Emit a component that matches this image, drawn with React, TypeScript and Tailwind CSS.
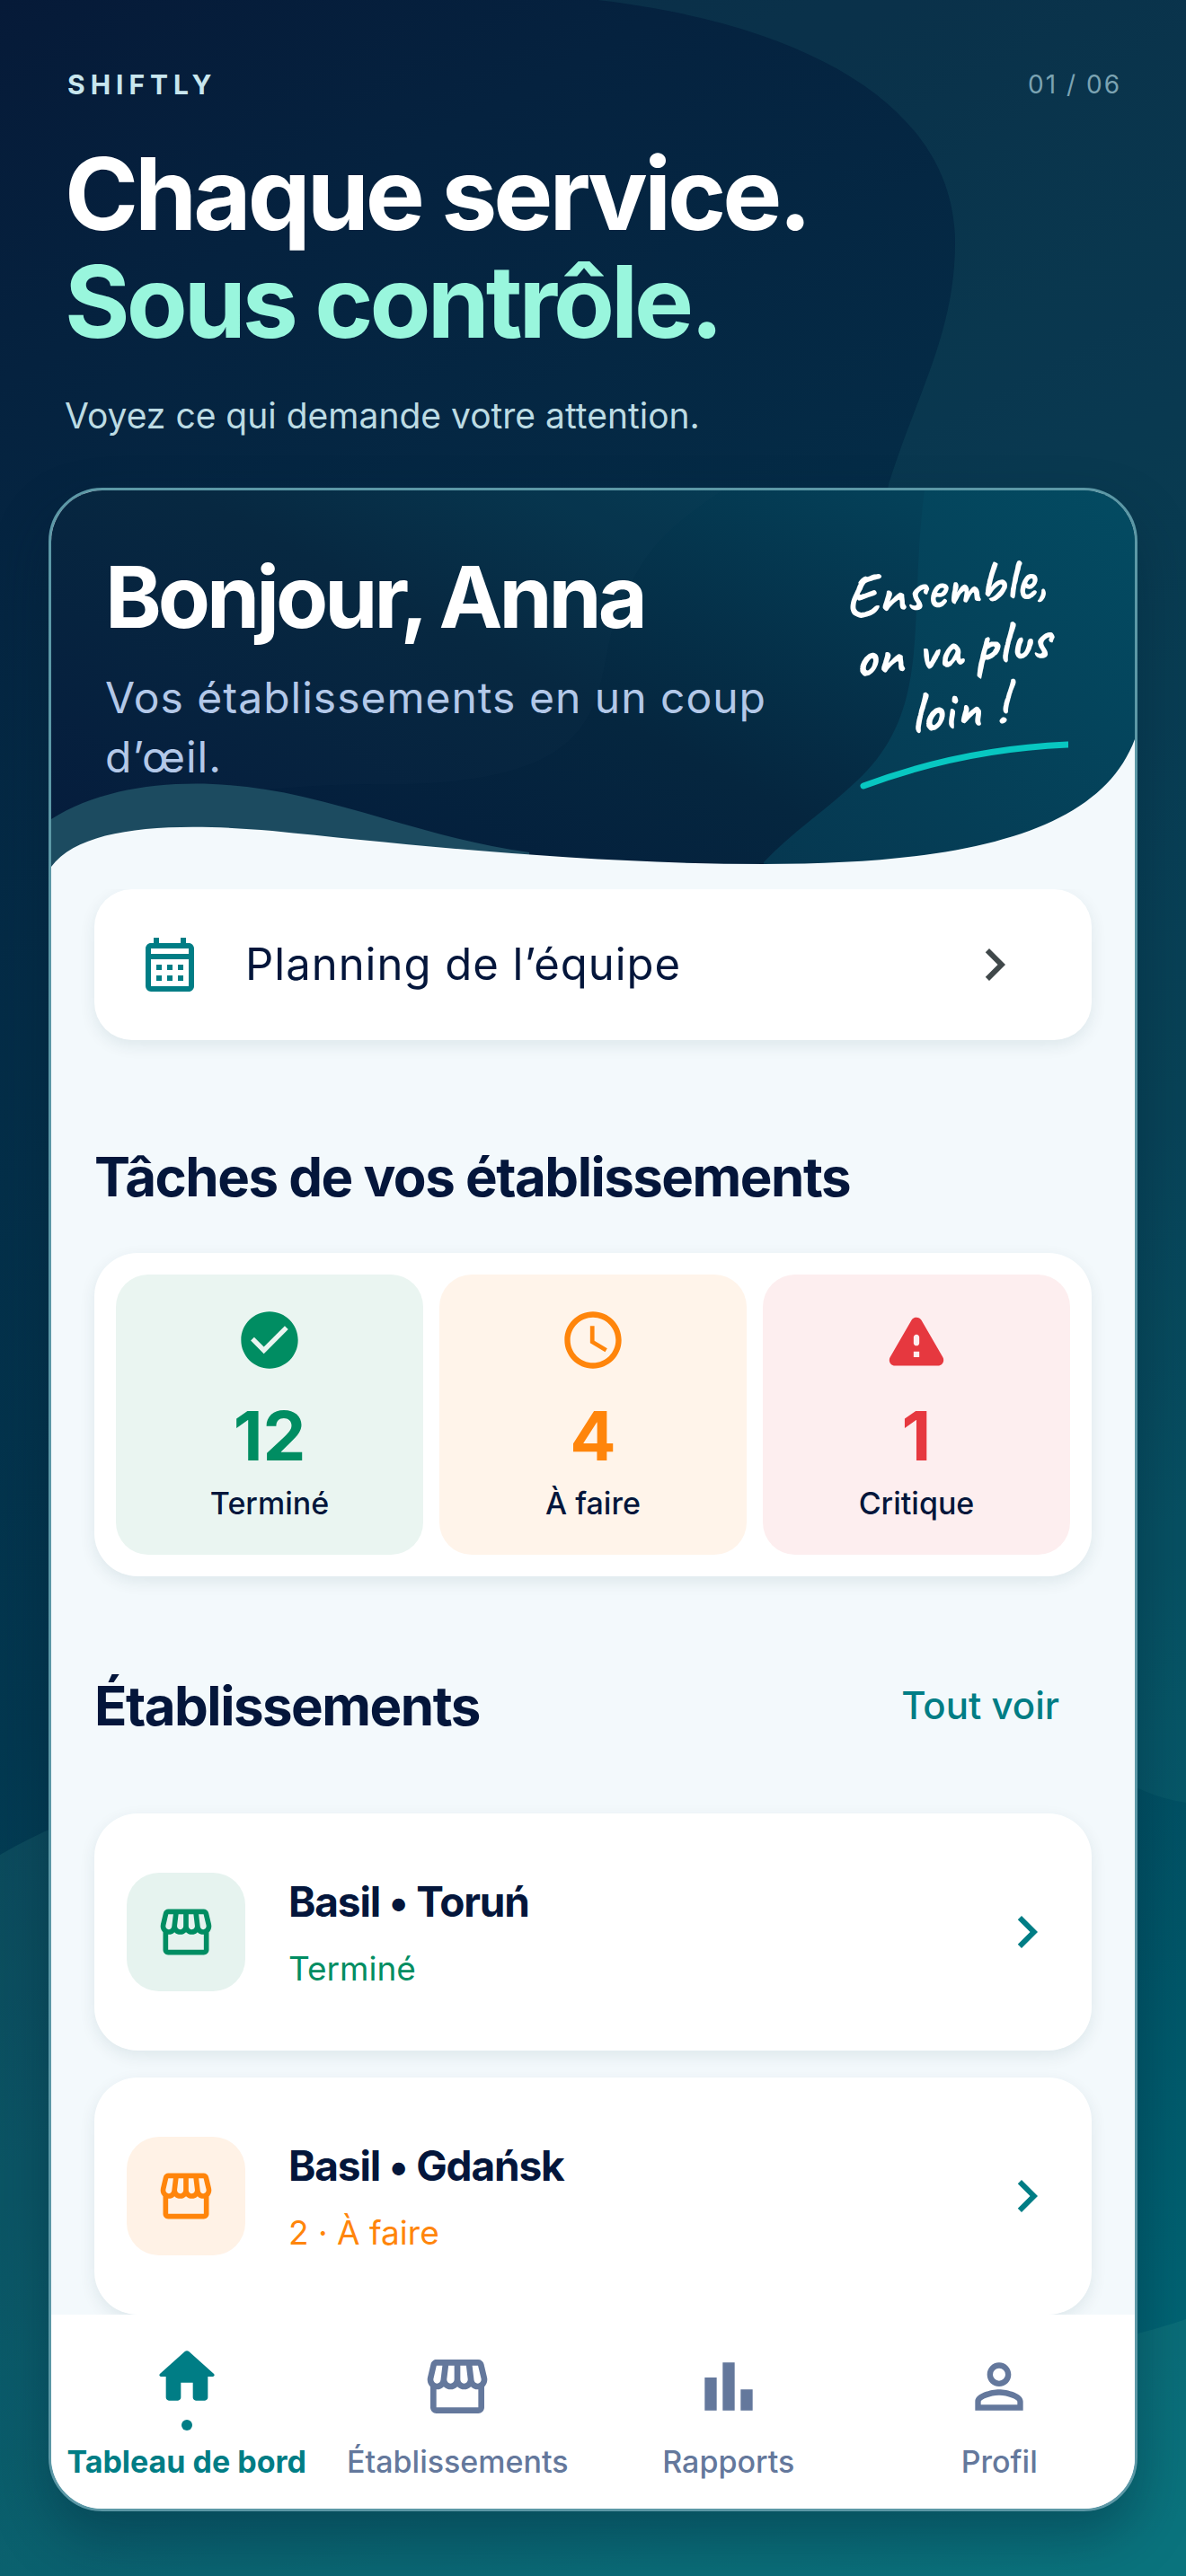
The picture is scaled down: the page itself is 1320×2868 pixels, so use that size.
import type {ComponentType} from 'react'
import {
  MdAccessTime,
  MdBarChart,
  MdChevronRight,
  MdOutlineCalendarMonth,
  MdOutlineStorefront,
  MdPersonOutline,
} from 'react-icons/md'

type IconProps = {className?: string}

function CheckCircleIcon({className}: IconProps) {
  return (
    <svg viewBox="0 0 24 24" fill="currentColor" className={className} aria-hidden="true">
      <path d="M12 2C6.48 2 2 6.48 2 12s4.48 10 10 10 10-4.48 10-10S17.52 2 12 2zm-2 14.8-4.6-4.65 1.2-1.2L10 14.4l7.35-7.4 1.2 1.2z" />
    </svg>
  )
}

function WarningIcon({className}: IconProps) {
  return (
    <svg viewBox="0 0 24 24" fill="currentColor" className={className} aria-hidden="true">
      <path d="M4.47 21h15.06c1.54 0 2.5-1.67 1.73-3L13.73 4.99c-.77-1.33-2.69-1.33-3.46 0L2.74 18c-.77 1.33.19 3 1.73 3zM12 14c-.55 0-1-.45-1-1v-2c0-.55.45-1 1-1s1 .45 1 1v2c0 .55-.45 1-1 1zm1 4h-2v-2h2v2z" />
    </svg>
  )
}

function HomeIcon({className}: IconProps) {
  return (
    <svg viewBox="0 0 24 24" fill="currentColor" className={className} aria-hidden="true">
      <path d="M10 19v-5h4v5c0 .55.45 1 1 1h3c.55 0 1-.45 1-1v-7h1.7c.46 0 .68-.57.33-.87L12.67 3.6c-.38-.34-.96-.34-1.34 0l-8.36 7.53c-.34.3-.13.87.33.87H5v7c0 .55.45 1 1 1h3c.55 0 1-.45 1-1z" />
    </svg>
  )
}

function PageBackground() {
  return (
    <svg
      viewBox="0 0 1320 2868"
      preserveAspectRatio="none"
      className="absolute inset-0 -z-10 h-full w-full"
      aria-hidden="true"
    >
      <defs>
        <linearGradient id="page" gradientUnits="userSpaceOnUse" x1="0" y1="0" x2="1500" y2="2700">
          <stop offset="0" stopColor="#061a38" />
          <stop offset="0.12" stopColor="#05223f" />
          <stop offset="0.55" stopColor="#033850" />
          <stop offset="1" stopColor="#006a78" />
        </linearGradient>
      </defs>
      <rect width="1320" height="2868" fill="url(#page)" />
      <path
        d="M665 0 C920 30 1063 130 1063 270 C1063 370 1020 440 989 539 C900 1100 1000 1960 1320 2007 V0 Z"
        fill="#2a8a85"
        fillOpacity="0.14"
      />
      <path
        d="M0 2065 C250 1920 500 2000 700 2300 C850 2600 1060 2670 1320 2582 V2868 H0 Z"
        fill="#4aa89a"
        fillOpacity="0.14"
      />
    </svg>
  )
}

function HeroBackground() {
  return (
    <svg
      viewBox="0 0 1206 444"
      preserveAspectRatio="none"
      className="absolute inset-0 -z-10 h-full w-full"
      aria-hidden="true"
    >
      <defs>
        <linearGradient id="hero" x1="0" y1="1" x2="1" y2="0.3">
          <stop offset="0" stopColor="#03193a" />
          <stop offset="0.55" stopColor="#05263f" />
          <stop offset="1" stopColor="#044159" />
        </linearGradient>
        <linearGradient id="heroSide" x1="0" y1="1" x2="1" y2="0">
          <stop offset="0" stopColor="#063750" />
          <stop offset="1" stopColor="#034b62" />
        </linearGradient>
      </defs>
      <rect width="1206" height="444" fill="url(#hero)" />
      <path
        d="M747 0 C690 40 660 60 629 141 C600 220 640 330 364 327 C250 327 120 345 0 366 V0 Z"
        fill="#4a6a80"
        fillOpacity="0.04"
      />
      <path d="M972 0 C953 144 983 244 896 324 C860 358 825 380 793 414 V444 H1206 V0 Z" fill="url(#heroSide)" />
      <path d="M0 366 C73 320 183 318 280 341 C373 363 443 391 532 403 V444 H0 Z" fill="#1c4b60" />
      <path
        d="M0 419 C33 374 133 369 246 379 C393 394 593 416 793 416 C1023 416 1168 379 1206 277 V444 H0 Z"
        fill="#f3f9fc"
      />
    </svg>
  )
}

type Stat = {
  value: number
  label: string
  icon: ComponentType<IconProps>
  tile: string
  color: string
}

const stats: Stat[] = [
  {value: 12, label: 'Terminé', icon: CheckCircleIcon, tile: 'bg-[#eaf5f1]', color: 'text-[#008d62]'},
  {value: 4, label: 'À faire', icon: MdAccessTime, tile: 'bg-[#fff4ea]', color: 'text-[#ff850b]'},
  {value: 1, label: 'Critique', icon: WarningIcon, tile: 'bg-[#fdeeef]', color: 'text-[#e6383f]'},
]

const venues = [
  {name: 'Basil • Toruń', status: 'Terminé', tile: 'bg-[#e6f3ef]', color: 'text-[#008d62]'},
  {name: 'Basil • Gdańsk', status: '2 · À faire', tile: 'bg-[#fff2e6]', color: 'text-[#ff850b]'},
]

const tabs: {label: string; icon: ComponentType<IconProps>; active?: boolean}[] = [
  {label: 'Tableau de bord', icon: HomeIcon, active: true},
  {label: 'Établissements', icon: MdOutlineStorefront},
  {label: 'Rapports', icon: MdBarChart},
  {label: 'Profil', icon: MdPersonOutline},
]

export default function App() {
  return (
    <div className="relative isolate flex min-h-screen flex-col overflow-hidden px-[54px] pb-[72px] font-[Inter,sans-serif]">
      <PageBackground />

      <header className="px-[18px] pt-[74px]">
        <div className="flex items-center justify-between pl-[3px] leading-[40px]">
          <span className="text-[30px] font-bold tracking-[6px] text-[#c8e6ee]">SHIFTLY</span>
          <span className="text-[28px] tracking-[2px] text-[#7ba3b2]">01 / 06</span>
        </div>
        <h1 className="mt-[42px] text-[111px] leading-[120px] font-bold tracking-[-4px] text-white">
          Chaque service.
          <br />
          <span className="text-[#99f6dd]">Sous contrôle.</span>
        </h1>
        <p className="mt-[40px] text-[39px] leading-[54px] text-[#bcdbe3]">Voyez ce qui demande votre attention.</p>
      </header>

      <div className="mt-[53px] flex grow flex-col overflow-hidden rounded-[60px] border-3 border-[#5c98a6] bg-[#f3f9fc] shadow-[0_30px_60px_rgba(2,30,50,0.35)]">
        <section className="relative isolate flex h-[444px] shrink-0 justify-between px-[60px]">
          <HeroBackground />
          <div className="max-w-[760px] pt-[60px]">
            <h2 className="text-[95px] leading-[118px] font-bold tracking-[-4px] text-white">Bonjour, Anna</h2>
            <p className="mt-[20px] text-[48px] leading-[66px] tracking-[1px] text-[#b3c8e8]">
              Vos établissements en un coup d’œil.
            </p>
          </div>
          <div className="w-[270px] pt-[74px]">
            <p className="w-[252px] -rotate-6 text-center font-[Caveat,cursive] text-[66px] leading-[68px] font-semibold text-white">
              Ensemble,
              <br />
              on va plus
              <br />
              loin&nbsp;!
            </p>
            <svg viewBox="0 0 236 56" className="ml-[20px] h-[56px] w-[236px]" fill="none" aria-hidden="true">
              <path d="M8 51 Q118 10 235 5" stroke="#08c7c1" strokeWidth="7" strokeLinecap="round" />
            </svg>
          </div>
        </section>

        <main className="flex flex-col px-[48px]">
          <button
            type="button"
            className="flex h-[168px] items-center rounded-[42px] bg-white pr-[72px] pl-[48px] text-left shadow-[0_6px_18px_rgba(0,60,70,0.09)]"
          >
            <MdOutlineCalendarMonth className="size-[72px] text-[#007d85]" />
            <span className="ml-[48px] grow text-[49px] tracking-[1px] text-[#04163b]">Planning de l’équipe</span>
            <MdChevronRight className="size-[72px] text-[#40484a]" />
          </button>

          <h2 className="mt-[116px] text-[60px] leading-[72px] font-bold tracking-tight text-[#04163b]">
            Tâches de vos établissements
          </h2>
          <ul className="mt-[49px] grid grid-cols-3 gap-[18px] rounded-[48px] bg-white p-[24px] shadow-[0_6px_18px_rgba(0,60,70,0.09)]">
            {stats.map(({value, label, icon: Icon, tile, color}) => (
              <li key={label} className={`flex h-[312px] flex-col items-center rounded-[36px] pt-[35px] ${tile}`}>
                <Icon className={`size-[76px] ${color}`} />
                <span className={`mt-[22px] text-[76px] leading-[92px] font-bold ${color}`}>{value}</span>
                <span className="mt-[8px] text-[34px] leading-[44px] font-medium text-[#04163b]">{label}</span>
              </li>
            ))}
          </ul>

          <div className="mt-[108px] flex items-center justify-between pr-[36px]">
            <h2 className="text-[60px] leading-[72px] font-bold tracking-tight text-[#04163b]">Établissements</h2>
            <a href="#etablissements" className="text-[42px] leading-[60px] font-medium text-[#007d85]">
              Tout voir
            </a>
          </div>
          <div id="etablissements" className="mt-[84px] flex flex-col gap-[30px]">
            {venues.map((venue) => (
              <button
                key={venue.name}
                type="button"
                className="flex h-[264px] items-center rounded-[48px] bg-white px-[36px] text-left shadow-[0_6px_18px_rgba(0,60,70,0.09)]"
              >
                <span className={`flex size-[132px] items-center justify-center rounded-[36px] ${venue.tile}`}>
                  <MdOutlineStorefront className={`size-[68px] ${venue.color}`} />
                </span>
                <span className="ml-[48px] flex grow flex-col gap-[18px] pt-[4px]">
                  <span className="text-[46px] leading-[60px] font-bold tracking-tight text-[#04163b]">
                    {venue.name}
                  </span>
                  <span className={`text-[37px] leading-[54px] ${venue.color}`}>{venue.status}</span>
                </span>
                <MdChevronRight className="size-[72px] text-[#007d85]" />
              </button>
            ))}
          </div>
        </main>

        <nav className="relative grid h-[216px] grid-cols-4 bg-white">
          {tabs.map(({label, icon: Icon, active}) => (
            <button
              key={label}
              type="button"
              aria-current={active ? 'page' : undefined}
              className={`flex flex-col items-center whitespace-nowrap ${active ? 'pt-[29px] text-[#007d85]' : 'pt-[40px] text-[#64789c]'}`}
            >
              <Icon className="size-[80px]" />
              {active && <span className="mt-[8px] size-[12px] rounded-full bg-current" />}
              <span
                className={`text-[34px] leading-[44px] ${active ? 'mt-[13px] font-bold' : 'mt-[22px] font-medium'}`}
              >
                {label}
              </span>
            </button>
          ))}
        </nav>
      </div>
    </div>
  )
}
